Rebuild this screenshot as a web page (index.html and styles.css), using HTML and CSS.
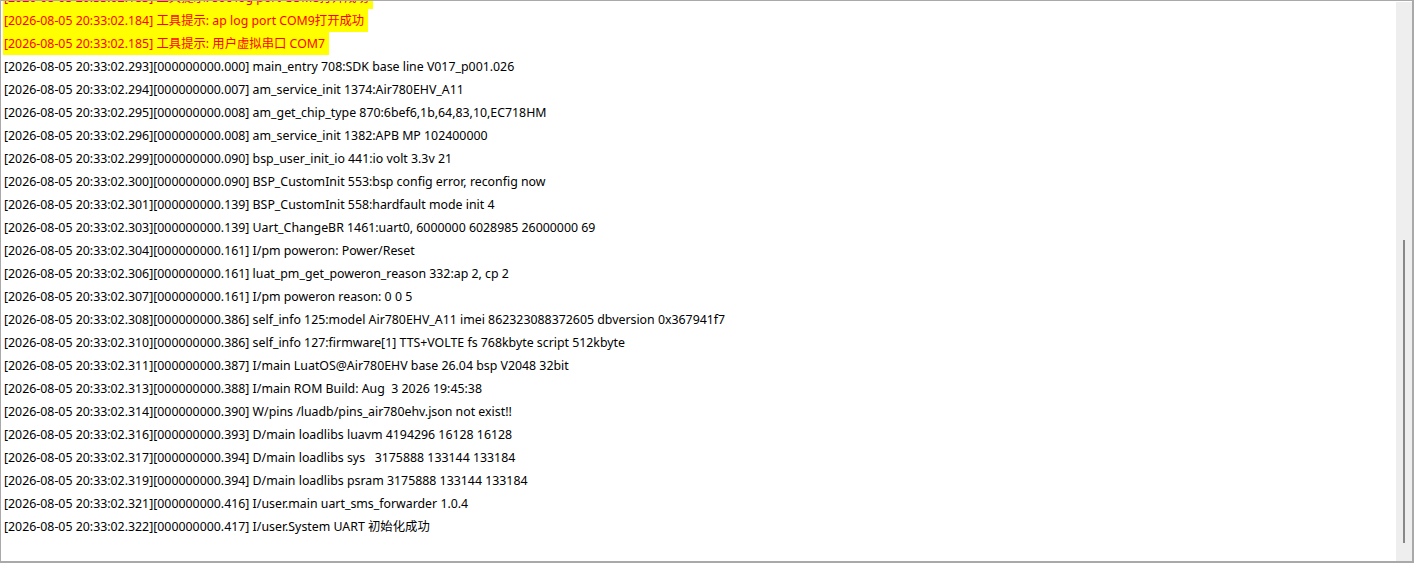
FILE: index.html
```html
<!DOCTYPE html>
<html>
<head>
<meta charset="utf-8">
<link rel="stylesheet" href="styles.css">
</head>
<body>
<div class="frame">
  <div class="log">
    <div class="lines">
      <div class="line tip"><span>[2026-08-05 20:33:02.183] 工具提示: soc log port COM8打开成功</span></div>
      <div class="line tip"><span>[2026-08-05 20:33:02.184] 工具提示: ap log port COM9打开成功</span></div>
      <div class="line tip"><span>[2026-08-05 20:33:02.185] 工具提示: 用户虚拟串口 COM7</span></div>
      <div class="line">[2026-08-05 20:33:02.293][000000000.000] main_entry 708:SDK base line V017_p001.026</div>
      <div class="line">[2026-08-05 20:33:02.294][000000000.007] am_service_init 1374:Air780EHV_A11</div>
      <div class="line">[2026-08-05 20:33:02.295][000000000.008] am_get_chip_type 870:6bef6,1b,64,83,10,EC718HM</div>
      <div class="line">[2026-08-05 20:33:02.296][000000000.008] am_service_init 1382:APB MP 102400000</div>
      <div class="line">[2026-08-05 20:33:02.299][000000000.090] bsp_user_init_io 441:io volt 3.3v 21</div>
      <div class="line">[2026-08-05 20:33:02.300][000000000.090] BSP_CustomInit 553:bsp config error, reconfig now</div>
      <div class="line">[2026-08-05 20:33:02.301][000000000.139] BSP_CustomInit 558:hardfault mode init 4</div>
      <div class="line">[2026-08-05 20:33:02.303][000000000.139] Uart_ChangeBR 1461:uart0, 6000000 6028985 26000000 69</div>
      <div class="line">[2026-08-05 20:33:02.304][000000000.161] I/pm poweron: Power/Reset</div>
      <div class="line">[2026-08-05 20:33:02.306][000000000.161] luat_pm_get_poweron_reason 332:ap 2, cp 2</div>
      <div class="line">[2026-08-05 20:33:02.307][000000000.161] I/pm poweron reason: 0 0 5</div>
      <div class="line">[2026-08-05 20:33:02.308][000000000.386] self_info 125:model Air780EHV_A11 imei 862323088372605 dbversion 0x367941f7</div>
      <div class="line">[2026-08-05 20:33:02.310][000000000.386] self_info 127:firmware[1] TTS+VOLTE fs 768kbyte script 512kbyte</div>
      <div class="line">[2026-08-05 20:33:02.311][000000000.387] I/main LuatOS@Air780EHV base 26.04 bsp V2048 32bit</div>
      <div class="line">[2026-08-05 20:33:02.313][000000000.388] I/main ROM Build: Aug&nbsp; 3 2026 19:45:38</div>
      <div class="line">[2026-08-05 20:33:02.314][000000000.390] W/pins /luadb/pins_air780ehv.json not exist!!</div>
      <div class="line">[2026-08-05 20:33:02.316][000000000.393] D/main loadlibs luavm 4194296 16128 16128</div>
      <div class="line">[2026-08-05 20:33:02.317][000000000.394] D/main loadlibs sys&nbsp;&nbsp; 3175888 133144 133184</div>
      <div class="line">[2026-08-05 20:33:02.319][000000000.394] D/main loadlibs psram 3175888 133144 133184</div>
      <div class="line">[2026-08-05 20:33:02.321][000000000.416] I/user.main uart_sms_forwarder 1.0.4</div>
      <div class="line">[2026-08-05 20:33:02.322][000000000.417] I/user.System UART 初始化成功</div>
    </div>
  </div>
  <div class="scrollbar">
    <div class="thumb"></div>
  </div>
</div>
</body>
</html>
```

FILE: styles.css
```css
html, body {
  margin: 0;
  padding: 0;
  background: #ffffff;
}

.frame {
  width: 1414px;
  height: 563px;
  box-sizing: border-box;
  display: flex;
  border-top: 1px solid #a9a9a9;
  border-left: 1px solid #a9a9a9;
  border-right: 2px solid #a9a9a9;
  border-bottom: 2px solid #a9a9a9;
  background: #ffffff;
  overflow: hidden;
}

.log {
  flex: 1;
  overflow: hidden;
  background: #ffffff;
}

.lines {
  margin-top: -15px;
  padding-left: 2px;
}

.line {
  height: 23px;
  line-height: 23px;
  font-family: "Noto Sans", "Noto Sans CJK SC", sans-serif;
  font-size: 12.35px;
  color: #000000;
  white-space: pre;
  padding-left: 1px;
}

.line.tip {
  padding-left: 0;
}

.line.tip span {
  display: inline-block;
  height: 23px;
  background: #ffff00;
  color: #ff0000;
  padding-left: 1px;
  padding-right: 4px;
}

.scrollbar {
  width: 16px;
  flex: none;
  margin-top: 1px;
  background: #eeeeee;
  position: relative;
}

.thumb {
  position: absolute;
  left: 7px;
  top: 238px;
  width: 2px;
  height: 303px;
  background: #888888;
}
```
